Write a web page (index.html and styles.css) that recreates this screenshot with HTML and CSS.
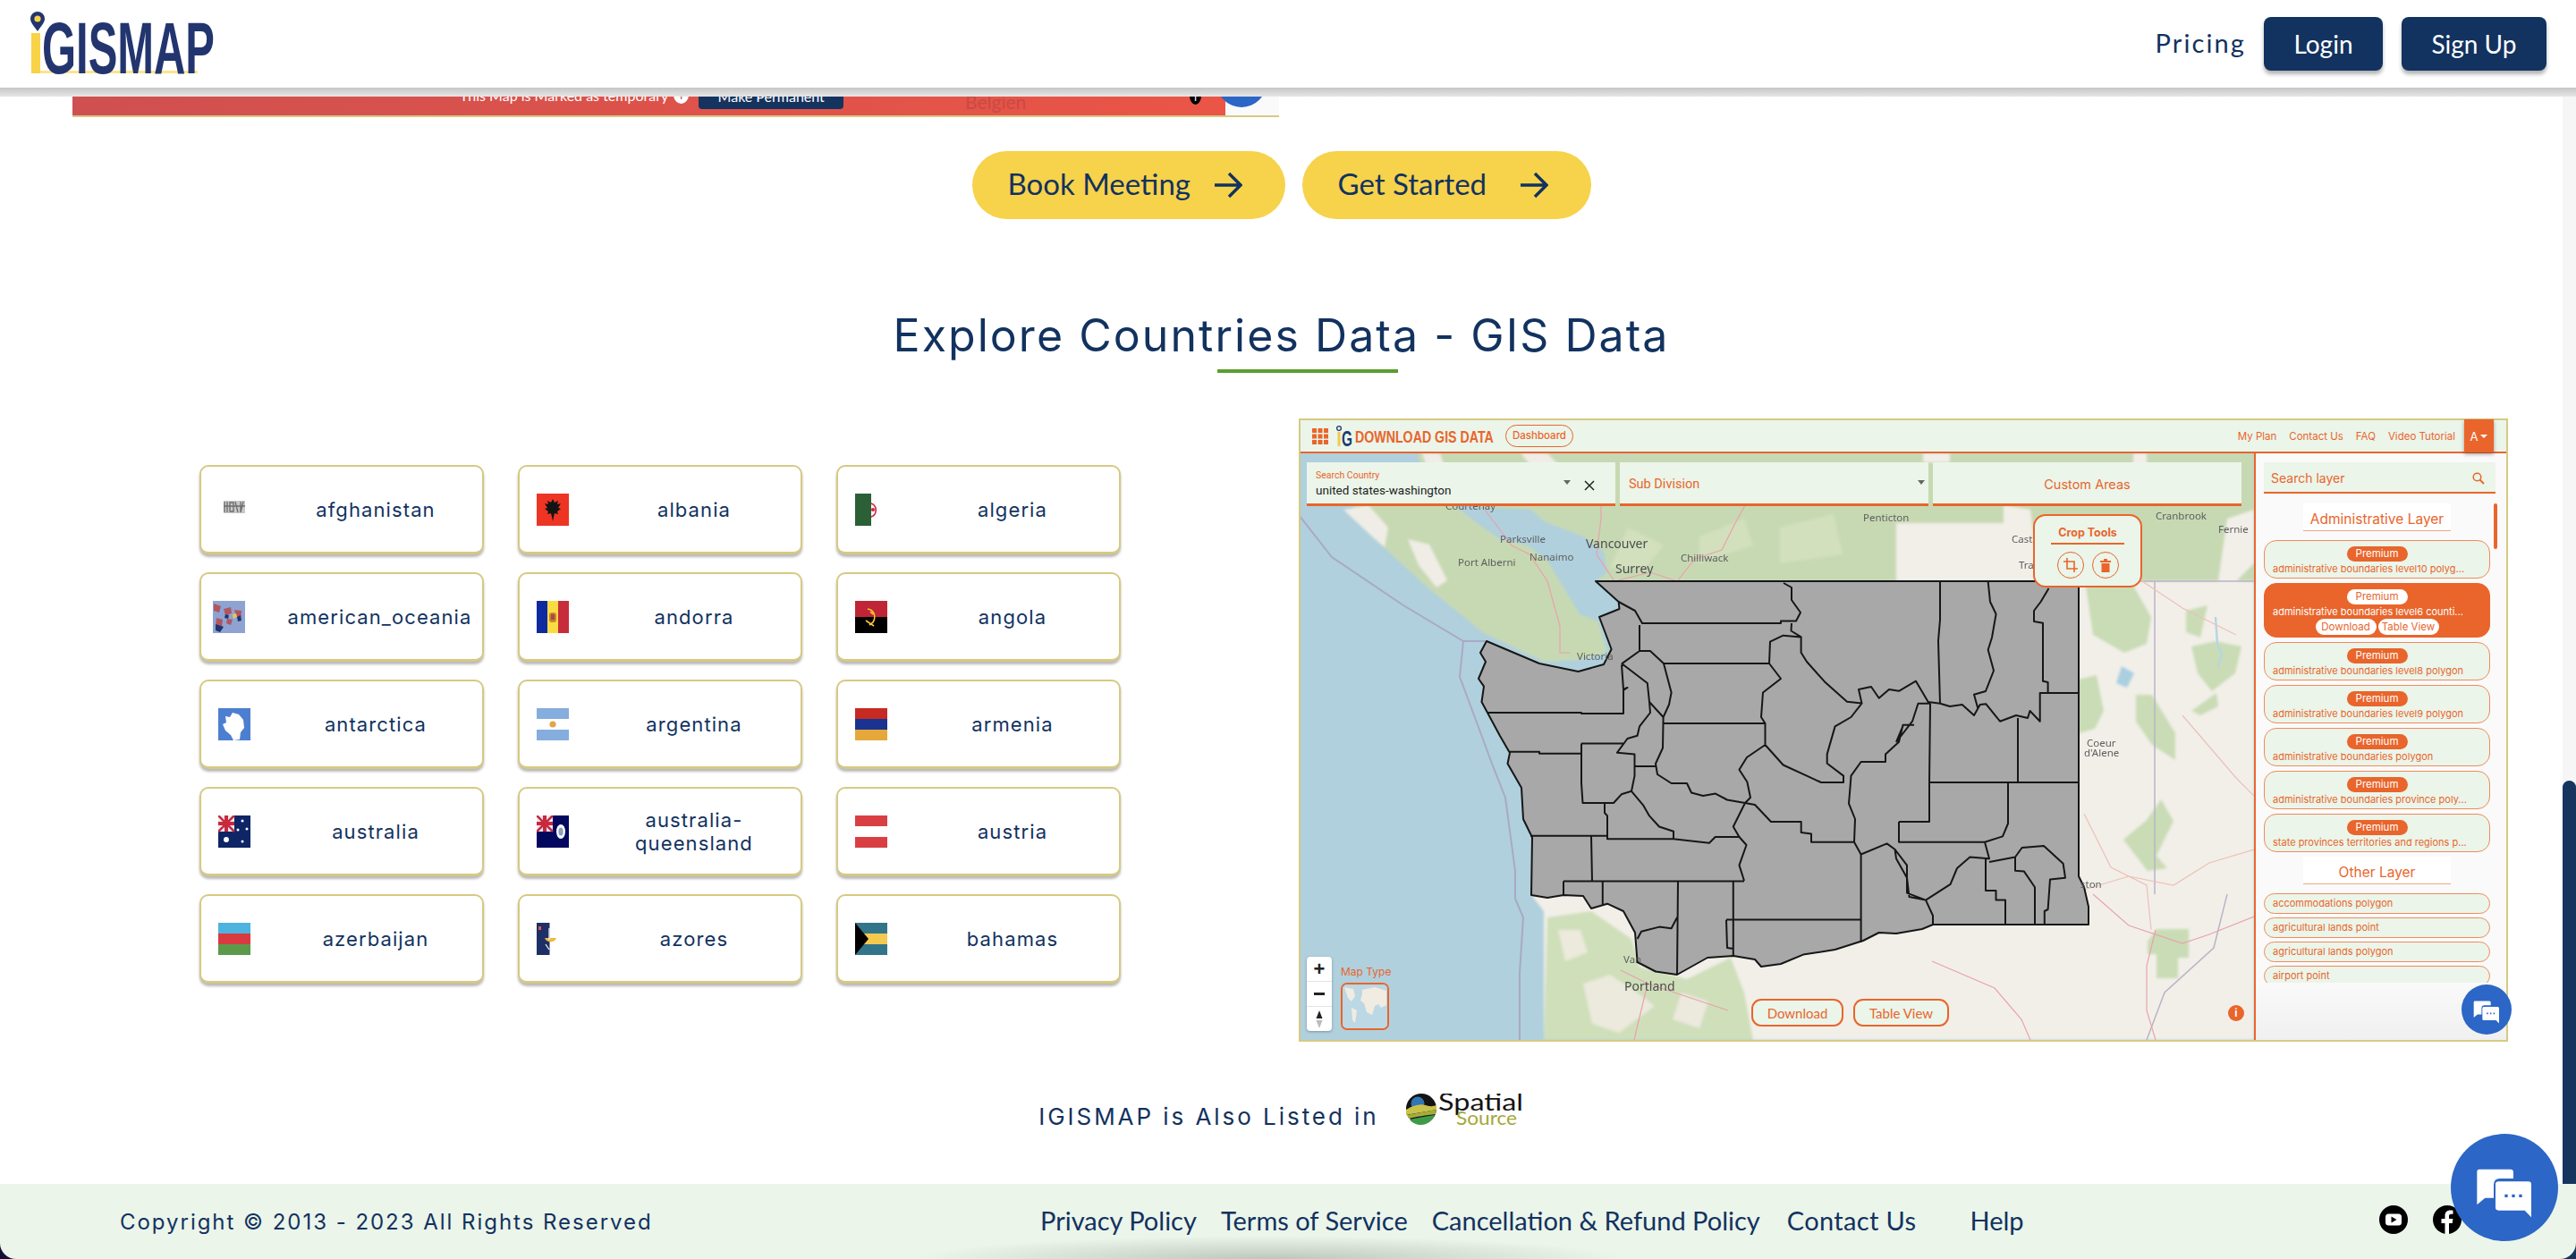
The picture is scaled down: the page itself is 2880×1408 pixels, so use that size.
FILE: index.html
```html
<!DOCTYPE html>
<html lang="en">
<head>
<meta charset="utf-8">
<title>IGISMAP - Explore Countries Data</title>
<link rel="stylesheet" href="styles.css">
</head>
<body>
<header class="site-header">
  <a class="logo" href="#">
    <svg width="212" height="98" viewBox="0 -12 212 98">
      <path d="M10 1a8 8 0 0 1 8 8c0 5-5 9-8 14c-3-5-8-9-8-14a8 8 0 0 1 8-8z" fill="#23356f"/>
      <circle cx="10" cy="9" r="3.6" fill="#f8d247"/>
      <rect x="3" y="25" width="10" height="45" fill="#f8d247"/>
      <rect x="13" y="67" width="176" height="3" fill="#fbe48d"/>
      <text class="logo-text" transform="translate(15 70) scale(.604 1)">GISMAP</text>
    </svg>
  </a>
  <nav class="site-nav">
    <a class="nav-link" href="#">Pricing</a>
    <a class="nav-btn nav-btn-login" href="#">Login</a>
    <a class="nav-btn nav-btn-signup" href="#">Sign Up</a>
  </nav>
</header>

<div class="scroll-track"><div class="scroll-thumb"></div></div>

<main class="content">
  <section class="banner">
    <div class="banner-map">
      <span class="banner-note">This Map is Marked as temporary</span>
      <span class="banner-info">i</span>
      <span class="banner-btn">Make Permanent</span>
      <span class="banner-place">Belgien</span>
      <span class="banner-dot">i</span>
      <span class="banner-chat"></span>
    </div>
    <div class="banner-side"></div>
  </section>

  <div class="cta-row">
    <a class="cta cta-book" href="#"><span class="cta-label">Book Meeting</span>
      <svg class="cta-arrow" width="32" height="32" viewBox="0 0 32 32"><path d="M1 16H29M17 3L30 16L17 29" fill="none" stroke="#12325f" stroke-width="3.4"/></svg>
    </a>
    <a class="cta cta-start" href="#"><span class="cta-label">Get Started</span>
      <svg class="cta-arrow" width="32" height="32" viewBox="0 0 32 32"><path d="M1 16H29M17 3L30 16L17 29" fill="none" stroke="#12325f" stroke-width="3.4"/></svg>
    </a>
  </div>

  <h1 class="section-title">Explore Countries Data - GIS Data</h1>
  <div class="section-rule"></div>

  <div class="explore">
    <div class="country-grid">
      <a class="country" href="#">
        <svg class="flag" viewBox="0 0 36 36"><rect width="36" height="36" fill="#fff"/><path d="M6 8h24v14H6z" fill="#c9c9c9"/><path d="M7 9v12M10 9v12M13 10h4v10h-4zM19 9l3 12M25 9v12M28 9l-3 12M6 14h24" stroke="#6d6d6d" stroke-width="1.3" fill="none"/></svg>
        <span class="country-name">afghanistan</span>
      </a>
      <a class="country" href="#">
        <svg class="flag" viewBox="0 0 36 36"><rect width="36" height="36" fill="#ee3524"/><path d="M18 6l2 4 4-2-1 4 4-1-3 5 3 1-4 3 1 3-4-1-1 4-1 5-1-5-1-4-4 1 1-3-4-3 3-1-3-5 4 1-1-4 4 2z" fill="#141414"/></svg>
        <span class="country-name">albania</span>
      </a>
      <a class="country" href="#">
        <svg class="flag" viewBox="0 0 36 36"><rect width="18" height="36" fill="#2b5f36"/><path d="M18 11a8 8 0 0 1 0 15" fill="#fff" stroke="#d2233c" stroke-width="1.6"/><circle cx="20" cy="18" r="2" fill="#d2233c"/></svg>
        <span class="country-name">algeria</span>
      </a>

      <a class="country country-long" href="#">
        <svg class="flag" viewBox="0 0 36 36"><rect width="36" height="36" fill="#8ea3d1"/><path d="M1 3l8 3-2 7-6-2zM12 9l8-2 1 7-7 2zM24 10l8 1-1 9-5-2zM4 19l7 2-1 8-7 1zM16 20l6 1-2 6-5-2z" fill="#b2555e"/><path d="M3 26l9 3-4 6-5-2zM14 15l4 1-1 4-4-1zM27 18l4-2 1 6-4 1z" fill="#1d3573"/><path d="M22 15l4-1 1 4-4 2z" fill="#e5c75a"/></svg>
        <span class="country-name">american_oceania</span>
      </a>
      <a class="country" href="#">
        <svg class="flag" viewBox="0 0 36 36"><rect width="12" height="36" fill="#0e2aa0"/><rect x="12" width="12" height="36" fill="#fbdb42"/><rect x="24" width="12" height="36" fill="#c72c3a"/><rect x="14" y="13" width="8" height="11" rx="3" fill="#c4862f"/><rect x="16" y="15" width="4" height="6" fill="#b3434a"/></svg>
        <span class="country-name">andorra</span>
      </a>
      <a class="country" href="#">
        <svg class="flag" viewBox="0 0 36 36"><rect width="36" height="18" fill="#bf2536"/><rect y="18" width="36" height="18" fill="#000"/><path d="M14 9c7 1 10 8 6 15l-4 3M12 22l9 6M17 12l3 3" fill="none" stroke="#f3cb35" stroke-width="1.6"/></svg>
        <span class="country-name">angola</span>
      </a>

      <a class="country" href="#">
        <svg class="flag" viewBox="0 0 36 36"><rect width="36" height="36" fill="#4d7fd0"/><path d="M8 9l5 1 3-5 7 2 5 6 1 9-4 5-1 8-7 1-3-6-6-5-3-7 4-2z" fill="#fff"/></svg>
        <span class="country-name">antarctica</span>
      </a>
      <a class="country" href="#">
        <svg class="flag" viewBox="0 0 36 36"><rect width="36" height="36" fill="#85addd"/><rect y="12" width="36" height="12" fill="#fff"/><circle cx="18" cy="18" r="3.6" fill="#e0a64a"/></svg>
        <span class="country-name">argentina</span>
      </a>
      <a class="country" href="#">
        <svg class="flag" viewBox="0 0 36 36"><rect width="36" height="12" fill="#c62a22"/><rect y="12" width="36" height="12" fill="#1a3390"/><rect y="24" width="36" height="12" fill="#e5a83a"/></svg>
        <span class="country-name">armenia</span>
      </a>

      <a class="country" href="#">
        <svg class="flag" viewBox="0 0 36 36"><rect width="36" height="36" fill="#0e2566"/><rect width="18" height="18" fill="#e9eaf2"/><path d="M0 0l18 18M18 0L0 18" stroke="#c8293c" stroke-width="2.5"/><path d="M9 0v18M0 9h18" stroke="#c8293c" stroke-width="4"/><circle cx="9" cy="27" r="3" fill="#fff"/><circle cx="27" cy="6" r="1.5" fill="#fff"/><circle cx="27" cy="29" r="1.5" fill="#fff"/><circle cx="32" cy="15" r="1.5" fill="#fff"/><circle cx="22" cy="16" r="1.5" fill="#fff"/></svg>
        <span class="country-name">australia</span>
      </a>
      <a class="country" href="#">
        <svg class="flag" viewBox="0 0 36 36"><rect width="36" height="36" fill="#03075e"/><rect width="18" height="18" fill="#e9eaf2"/><path d="M0 0l18 18M18 0L0 18" stroke="#c8293c" stroke-width="2.5"/><path d="M9 0v18M0 9h18" stroke="#c8293c" stroke-width="4"/><ellipse cx="27" cy="18" rx="5" ry="8" fill="#fff"/><ellipse cx="27" cy="18" rx="2.6" ry="4.5" fill="#7aa0d4"/><circle cx="27" cy="18" r="1.2" fill="#d8a335"/></svg>
        <span class="country-name">australia-<br>queensland</span>
      </a>
      <a class="country" href="#">
        <svg class="flag" viewBox="0 0 36 36"><rect width="36" height="12" fill="#d93f42"/><rect y="24" width="36" height="12" fill="#d93f42"/></svg>
        <span class="country-name">austria</span>
      </a>

      <a class="country" href="#">
        <svg class="flag" viewBox="0 0 36 36"><rect width="36" height="12" fill="#4fb3df"/><rect y="12" width="36" height="12" fill="#d93a3f"/><rect y="24" width="36" height="12" fill="#5b9a4a"/><path d="M20 14a4 4 0 1 0 0 8a3.4 3.4 0 1 1 0-8z" fill="#fff"/></svg>
        <span class="country-name">azerbaijan</span>
      </a>
      <a class="country" href="#">
        <svg class="flag" viewBox="0 0 36 36"><rect width="14.5" height="36" fill="#1d2f66"/><rect x="2" y="4" width="3" height="4" fill="#e2564e"/><path d="M9 17a7 7 0 0 0 13 0z" fill="#eeb93f"/><path d="M14 6v13M10 24l4 6" stroke="#fff" stroke-width="1.2"/></svg>
        <span class="country-name">azores</span>
      </a>
      <a class="country" href="#">
        <svg class="flag" viewBox="0 0 36 36"><rect width="36" height="36" fill="#32758a"/><rect y="12" width="36" height="12" fill="#f4c94e"/><path d="M0 0L15 18L0 36z" fill="#000"/></svg>
        <span class="country-name">bahamas</span>
      </a>
    </div>

    <section class="map-window">
      <div class="map-top">
        <svg class="map-grid-icon" width="18" height="18" viewBox="0 0 18 18"><path d="M0 0h5v5H0zM6.500 0h5v5h-5zM13 0h5v5h-5zM0 6.500h5v5H0zM6.500 6.500h5v5h-5zM13 6.500h5v5h-5zM0 13h5v5H0zM6.500 13h5v5h-5zM13 13h5v5h-5z" fill="#e9652b"/></svg>
        <svg class="map-logo" width="18" height="30" viewBox="0 0 18 30"><circle cx="3" cy="6" r="2.400" fill="none" stroke="#1c3a6e" stroke-width="1.300"/><rect x="1.500" y="10" width="3" height="16" fill="#f4c94e"/><text class="map-logo-g" transform="translate(6 26) scale(.64 1)">G</text></svg>
        <svg class="map-title-svg" width="158" height="26" viewBox="0 0 158 26"><text class="map-title" transform="translate(0 20) scale(.789 1)">DOWNLOAD GIS DATA</text></svg>
        <a class="map-dash" href="#">Dashboard</a>
        <div class="map-links">
          <a href="#">My Plan</a>
          <a href="#">Contact Us</a>
          <a href="#">FAQ</a>
          <a href="#">Video Tutorial</a>
        </div>
        <div class="map-user">A<span class="caret caret-white"></span></div>
      </div>
      <div class="map-body">
        <div class="map-canvas">
          <svg class="map-art" width="1066" height="656" viewBox="1454 507 1066 656">
            <rect x="1454" y="507" width="1066" height="656" fill="#b0d0dd"/>
            <g class="map-land">
            <path d="M1500 545L1534 600L1596 657L1659 708L1726 740L1766 738L1797 730L1787 695L1766 687L1748 657L1730 627L1708 610L1677 603L1654 587L1619 560L1574 545Z" fill="#c7d9b3"/>
            <path d="M1502 570L1534 600L1548 612L1552 590L1530 565ZM1574 603l24 6 20 40 -12 8 -20 -25z" fill="#f0ede6"/>
            <path d="M1585 507H2520V650H1784L1797 640L1793 617L1770 600L1726 583L1712 570L1650 567L1587 517Z" fill="#c7d9b3"/>
            <path d="M1700 507h30l20 20 -25 10zM1590 507h20l10 30 -20 0z" fill="#f0ede6"/>
            <path d="M2120 585H2240V650H2120ZM2240 565l30 5 10 80h-40zM2385 507h15v20h-15zM2150 507h30v10h-30zM2490 580l30 -10v60l-20 20h-20z" fill="#f2efe9"/>
            <path d="M1820 590l40 20 -20 25h-40z M1900 600l50 -20 10 30 -60 20z M1990 590l60 -15 10 45 -70 10z" fill="#d2e0bd"/>
            <rect x="2324" y="650" width="196" height="513" fill="#f2efe9"/>
            <path d="M1712 1001L2335 1001V1163H1726V1019Z" fill="#f2efe9"/>
            <path d="M1730 1026L1779 1019L1824 1050L1833 1081L1886 1095L1935 1071L1950 1110L1960 1163H1726Z" fill="#cfdfba"/>
            <path d="M1742 1040l25 0 8 25 -25 10zM1770 1100l30 -10 30 20 20 15 -40 30 -30 -10zM1880 1110l30 10 -10 30 -30 -10z" fill="#ece9dd"/>
            <path d="M2332 655L2385 655L2405 690L2400 720L2375 730L2340 710ZM2444 683L2468 677L2460 713L2444 707ZM2450 723L2477 717L2506 723L2499 753L2473 773L2457 753ZM2388 777L2406 777L2432 820L2432 850L2406 833L2388 807ZM2450 795L2478 775L2480 790L2460 800ZM2416 894L2430 918L2411 957L2423 971L2401 974L2374 939L2400 917ZM2411 1039H2447V1071H2435V1094H2411V1067H2401V1053ZM2324 760l20 -5 8 40 -10 20 -18 5z" fill="#c9dcb5"/>
            <path d="M2372 745l14 8 -8 16 -12 -5z" fill="#a9cfe0"/>
            </g>
            <path d="M2477 690l2 30 5 12 -4 14" fill="none" stroke="#b7d6e2" stroke-width="2.500"/>
            <path d="M1453 577L1489 623L1569 677L1636 717H1661M1636 717L1632 757L1654 816L1668 854L1683 892L1694 974L1694 1005L1703 1026L1699 1088V1163" fill="none" stroke="#a9a9c6" stroke-width="2"/>
            <path d="M2324 650H2520M2409 650V1000M2490 1000L2475 1060L2420 1110L2400 1163" fill="none" stroke="#b9b4c7" stroke-width="1.500"/>
            <path d="M1660 570l30 40 20 10 20 30 14 50 0 30h12M1790 550v30l-5 40 20 30 40 -10 30 10 20 -25 30 -10 15 -30 25 -45M2340 1000l40 35 60 20 30 -10 50 -20M2160 1075l70 30 30 35 10 23M1842 1100l-15 63M1842 1100l-30 -15M1842 1100l30 10 60 20M2410 1040l-10 40 0 50 10 33" fill="none" stroke="#e9a2ad" stroke-width="1.200"/>
            <path d="M2330 995l50 -15 50 10 40 -25 50 -15M2330 910l30 60 40 20 5 50M2380 640l60 40 60 30M2440 800l60 70 20 20" fill="none" stroke="#ecc0b6" stroke-width="1.200"/>
            <path d="M1784 650H2324V980L2330 992L2335 1014L2335 1034H2161L2149 1039L2120 1044L2100.700 1043L2083 1052L2051.600 1062L2016 1067.600L1991 1078L1969 1081L1962 1073L1938 1069L1909 1071L1875 1090L1851 1086.500L1830.600 1076L1828 1043L1815 1019L1797 1010.700L1779 1016L1770 1002L1748 1001L1730 1004L1712 1001L1713 936.500L1703 916L1701 881L1685.500 854L1688 842L1677 823L1663 797L1656.500 785L1659 767.600L1653 759L1661 740L1655 730L1662 717L1721 742L1764.500 751L1793 743L1801.600 726L1788 690L1810.500 681L1809.600 673Z" fill="#a8a8a8" stroke="#161616" stroke-width="2" stroke-linejoin="round"/>
            <path class="county-lines" d="M1809.600 673L1828 683L1836 697H1991V694.500L2008 694.500L2013 685L2003 671V657L1994 652M1833 699V728L1813 742.400M1833 728H1845L1860 742H1978M2003 697L2002.500 705.500L2013.600 712.400L1993.600 710.700L1979 717.600L1978 742L1991 759L1971 774.500L1969 802L1973.500 809H1859.600M1860 742L1868.600 774.500L1866 788L1859.600 802L1859 836.500L1851 854L1853 866L1868.600 876H1886L1891 886.500L1904 890L1918 887.600L1931 894.500L1951 898M1973.500 809V833L1953 847L1944.500 860.700L1953.400 874.500L1957 892L1951 898M1973.500 833L1993.600 855.500L2020 867.600L2036 875H2061V867.600L2042.700 853.800V843.400L2051.600 812.400L2069.500 802L2081.500 786.600L2065 784.800L2040 762.400L2020 740L2013.600 729.700V712.400M2081.500 786.600L2078 771L2092 768L2100.700 780.700L2112 771L2123 772.800L2142 761.700L2155.700 785L2169 786.700L2180 790L2193.700 788L2207 800L2213.700 788L2220.400 787.300L2236 806.700L2254 800L2267 803L2269.500 795L2280.700 806.700V775H2324.500M2169 650V693L2167 716.700L2169 786.700M2222.700 650.700L2225 673L2231.600 686.700L2227 713L2222.700 726.700L2229 750L2220 773L2207 776.700L2211.500 793M2290.500 658L2281.600 673L2274 683V695L2284 696.700V761.700L2289.600 763V775M2158 786.700L2157 875M2256 803V875M2120 830L2138 806.700L2144.500 786.700H2158M2140 810.700H2127.500L2123 829.700L2108 843.400V852H2080.600L2069.500 867.600L2068.600 879.700L2067 898.600L2074 916L2073 941.700L2080.600 955.500L2109.600 943.400L2118.600 950L2132 967.600V998.600L2153 1006.600M2120 830L2127.500 812M1951 898L1962 900L1980 919H2013.700V931L2025 932.400V941.700H2073M2123 919H2157V875M2123 919V941.700H2219L2239 935.400L2245 921V875M2156 875H2323.600M2219 941.800L2224 960.300L2202.400 958.500L2188 971L2180.600 988.800L2153 1006.600L2134.500 1003L2132 981.700L2120 960.300L2118.600 950M2153 1006.600L2161 1024L2161 1034M2220 960.300V996H2231.500V1006.600H2242V1033M2224 964L2253 958.500L2260.600 948L2285 946L2306.600 965.700L2309 981.700L2292 983.400L2289.600 1017L2285.800 1019V1033M2253 958.500V973.800L2263 974.600L2275 992.300V1033M1813 743.400L1815 771L1819.500 769L1815 772V798H1768V797H1663M1813 742L1841.800 764L1844 785L1859.600 802M1844 785L1845 797L1833 812.400L1830.600 822.800L1819.500 826L1808 841.700L1827.500 843.400V857H1850.700M1768 831.400H1815M1688 840.700H1721V842.800H1768M1768 831.400V876L1769.500 898H1804L1812.800 888.300L1824 884.800L1827.500 867.600V857M1794 898V909L1797 912.400V938.300H1871L1886.400 940L1911 942.800L1917.700 936H1944.500M1824 884.800L1837 900.300L1844 912.400L1855 924.500L1871 929.700V938M1951 898L1937.800 924.500L1944.500 936L1952.500 945L1944.500 967.600L1950 985M1711 934.800H1797M1779 934.800L1780 985.500M1748 985.500H1950M1748 985.500V1001M1791.800 985.500V1011.700M1876 986.500L1875 1090M1937.800 985.500V1069M1930 1028.600H2080.600M1930 1028.600L1931 1060L1938 1061M2080.600 955.500V1053.800M1830.600 1050L1835 1041.700L1855 1036.600L1868.600 1038.300L1875 1026" fill="none" stroke="#161616" stroke-width="2" stroke-linejoin="round"/>
            <g class="map-labels">
              <text x="1616" y="570">Courtenay</text>
              <text x="1677" y="607">Parksville</text>
              <text x="1630" y="633">Port Alberni</text>
              <text x="1710" y="627">Nanaimo</text>
              <text class="map-label-big" x="1773" y="613">Vancouver</text>
              <text class="map-label-big" x="1806" y="641">Surrey</text>
              <text x="1879" y="628">Chilliwack</text>
              <text x="2083" y="583">Penticton</text>
              <text x="2410" y="581">Cranbrook</text>
              <text x="2480" y="596">Fernie</text>
              <text x="2249" y="607">Castl</text>
              <text x="2257" y="636">Trai</text>
              <text x="1763" y="738">Victoria</text>
              <text x="2333" y="835">Coeur</text>
              <text x="2330" y="846">d'Alene</text>
              <text x="2326" y="993">ston</text>
              <text x="1815" y="1077">Van</text>
              <text class="map-label-big" x="1816" y="1108">Portland</text>
            </g>
          </svg>

          <div class="map-filters">
            <div class="filter">
              <div class="filter-text">
                <span class="filter-label">Search Country</span>
                <span class="filter-value">united states-washington</span>
              </div>
              <span class="caret caret-grey"></span>
              <svg class="filter-x" width="12" height="12" viewBox="0 0 12 12"><path d="M1 1l10 10M11 1L1 11" stroke="#222" stroke-width="1.500"/></svg>
            </div>
            <div class="filter filter-sub">
              <span class="filter-placeholder">Sub Division</span>
              <span class="caret caret-grey"></span>
            </div>
            <div class="filter filter-custom">Custom Areas</div>
          </div>

          <div class="crop-tools">
            <div class="crop-title">Crop Tools</div>
            <div class="crop-icons">
              <span class="crop-btn"><svg width="16" height="16" viewBox="0 0 16 16"><path d="M4 0v12h12M0 4h12v12" fill="none" stroke="#e9652b" stroke-width="1.600"/></svg></span>
              <span class="crop-btn"><svg width="14" height="16" viewBox="0 0 14 16"><path d="M1 3h12v2H1zM5 1h4v2H5zM2.500 6h9v10h-9z" fill="#e9652b"/></svg></span>
            </div>
          </div>

          <div class="zoom-ctrl">
            <span class="zoom-cell zoom-sym">+</span>
            <span class="zoom-cell zoom-minus"></span>
            <span class="zoom-cell"><svg width="8" height="22" viewBox="0 0 8 22"><path d="M4 1l3.500 9h-7z" fill="#222"/><path d="M4 21l3.500-9h-7z" fill="#bbb"/></svg></span>
          </div>

          <div class="map-type">
            <span class="map-type-label">Map Type</span>
            <div class="map-type-thumb">
              <svg width="50" height="49" viewBox="0 0 50 49"><rect width="50" height="49" fill="#bcd8e4"/><path d="M2 3l10 2 2 8-4 6-4-4zM10 26l6 3-2 14-3-3zM22 6l14-3 13 4v16l-6 3-3-4-4 2-3 10-6-3-3-10-4-3 2-8z" fill="#f0ece2"/></svg>
            </div>
          </div>

          <div class="map-actions">
            <a class="map-action map-action-dl" href="#">Download</a>
            <a class="map-action map-action-tv" href="#">Table View</a>
          </div>

          <span class="map-info">i</span>
        </div>

        <aside class="layers">
          <div class="layer-search">
            <span>Search layer</span>
            <svg width="14" height="14" viewBox="0 0 14 14"><circle cx="5.500" cy="5.500" r="4.300" fill="none" stroke="#e9652b" stroke-width="1.500"/><path d="M8.500 8.500L13 13" stroke="#e9652b" stroke-width="1.800"/></svg>
          </div>
          <div class="layer-list">
            <div class="layer-heading">Administrative Layer</div>
            <div class="layer-card"><span class="pill">Premium</span><span class="layer-name">administrative boundaries level10 polyg...</span></div>
            <div class="layer-card layer-card-on"><span class="pill">Premium</span><span class="layer-name">administrative boundaries level6 counti...</span>
              <div class="layer-actions"><span class="mini-pill">Download</span><span class="mini-pill">Table View</span></div>
            </div>
            <div class="layer-card"><span class="pill">Premium</span><span class="layer-name">administrative boundaries level8 polygon</span></div>
            <div class="layer-card"><span class="pill">Premium</span><span class="layer-name">administrative boundaries level9 polygon</span></div>
            <div class="layer-card"><span class="pill">Premium</span><span class="layer-name">administrative boundaries polygon</span></div>
            <div class="layer-card"><span class="pill">Premium</span><span class="layer-name">administrative boundaries province poly...</span></div>
            <div class="layer-card"><span class="pill">Premium</span><span class="layer-name">state provinces territories and regions p...</span></div>
            <div class="layer-heading layer-heading-other">Other Layer</div>
            <div class="layer-plain">accommodations polygon</div>
            <div class="layer-plain">agricultural lands point</div>
            <div class="layer-plain">agricultural lands polygon</div>
            <div class="layer-plain">airport point</div>
            <div class="layer-thumb"></div>
          </div>
          <span class="chat chat-small">
            <svg width="56" height="56" viewBox="0 0 360 360"><path d="M96 119H200Q210 119 210 129V150H165Q144 150 144 172V215H115L88 238V127Q88 119 96 119Z" fill="#fff"/><path d="M160 160H260Q270 160 270 170V280L248 257H160Q150 257 150 247V170Q150 160 160 160Z" fill="#fff"/><path d="M181 203h10v10h-10zM205 203h10v10h-10zM229 203h10v10h-10z" fill="#2c66c6"/></svg>
          </span>
        </aside>
      </div>
    </section>
  </div>

  <div class="listed">
    <span class="listed-text">IGISMAP is Also Listed in</span>
    <svg class="listed-logo" width="133" height="36" viewBox="0 0 133 36">
      <circle cx="18" cy="17" r="17" fill="#141414"/>
      <circle cx="14" cy="11" r="7.500" fill="#2f77b5"/>
      <path d="M1 18c8-5 16-7 22-5s8 1 12 0v5c-10 2-24 4-34 6z" fill="#c8c24a"/>
      <path d="M2 24c10-2 22-4 33-6l-1 5c-10 1-22 3-30 5z" fill="#a5ac3a"/>
      <path d="M5 29c9-2 19-4 28-5c-3 7-9 11-15 11c-5 0-10-2-13-6z" fill="#3f9b48"/>
      <text class="spatial-top" x="37" y="19" textLength="95" lengthAdjust="spacingAndGlyphs">Spatial</text>
      <text class="spatial-bottom" x="57" y="35" textLength="68" lengthAdjust="spacingAndGlyphs">Source</text>
    </svg>
  </div>
</main>

<footer class="site-footer">
  <span class="copyright">Copyright © 2013 - 2023 All Rights Reserved</span>
  <nav class="footer-links">
    <a href="#">Privacy Policy</a>
    <a href="#">Terms of Service</a>
    <a href="#">Cancellation &amp; Refund Policy</a>
    <a class="footer-contact" href="#">Contact Us</a>
    <a class="footer-help" href="#">Help</a>
  </nav>
  <div class="footer-social">
    <svg width="32" height="32" viewBox="0 0 32 32"><circle cx="16" cy="16" r="16" fill="#000"/><rect x="7" y="9.500" width="18" height="13" rx="3.500" fill="#fff"/><path d="M13.500 12.500l6 3.500-6 3.500z" fill="#000"/></svg>
    <svg width="32" height="32" viewBox="0 0 32 32"><circle cx="16" cy="16" r="16" fill="#000"/><path d="M13.500 32V20H9.500v-5h4v-3.500c0-4 2.500-6 6-6 1.700 0 3 .2 3 .2v4h-2c-2 0-2.500 1-2.500 2.300V15h4.400l-.7 5h-3.700v12z" fill="#fff"/></svg>
  </div>
</footer>

<a class="chat chat-large" href="#">
  <svg width="120" height="120" viewBox="0 0 360 360"><path d="M96 119H200Q210 119 210 129V150H165Q144 150 144 172V215H115L88 238V127Q88 119 96 119Z" fill="#fff"/><path d="M160 160H260Q270 160 270 170V280L248 257H160Q150 257 150 247V170Q150 160 160 160Z" fill="#fff"/><path d="M181 203h10v10h-10zM205 203h10v10h-10zM229 203h10v10h-10z" fill="#2c66c6"/></svg>
</a>
</body>
</html>
```
FILE: styles.css
```css
* { box-sizing: border-box; }
html, body { margin: 0; height: 1408px; overflow: hidden; }
body { position: relative; background: linear-gradient(#fff 1385px, #15103a 0); color: #12325f; font-family: "Inter", "Liberation Sans", sans-serif; }
a { color: inherit; text-decoration: none; }

/* Header */
.site-header { position: absolute; top: 0; left: 0; right: 0; height: 98px; z-index: 10; background: #fff; display: flex; align-items: center; justify-content: space-between; padding: 0 33px 0 32px; }
.site-header::after { content: ""; position: absolute; left: 0; right: 0; top: 98px; height: 10px; background: linear-gradient(#c6c6c6, #e6e6e6); }
.logo { display: block; height: 98px; }
.logo-text { font-family: "Liberation Sans", sans-serif; font-weight: 700; font-size: 81px; fill: #23356f; }
.site-nav { display: flex; align-items: center; }
.nav-link { font-family: "Lato", sans-serif; font-size: 29px; letter-spacing: 2.1px; margin: -3px 20px 0 0; color: #12325f; }
.nav-btn { display: flex; align-items: center; justify-content: center; height: 60px; border-radius: 8px; background: #12325f; color: #fff; font-family: "Lato", sans-serif; font-size: 28px; box-shadow: 0 4px 4px rgba(0,0,0,.3); }
.nav-btn-login { width: 133px; margin-right: 21px; }
.nav-btn-signup { width: 162px; }

/* Scrollbar overlay */
.scroll-track { position: absolute; top: 108px; right: 0; bottom: 0; width: 15px; background: #f6f6f6; }
.scroll-thumb { margin-top: 765px; height: 535px; background: #15355f; border-radius: 8px 8px 0 0; }

/* Page content */
.content { padding-right: 15px; }
.banner { display: flex; width: 1349px; height: 131px; margin-left: 81px; border-bottom: 2px solid #d6c983; }
.banner-map { position: relative; width: 1289px; display: flex; align-items: flex-end; padding-left: 433px; background: linear-gradient(90deg, #cf5050, #ea5546); font-family: "Lato", sans-serif; }
.banner-side { flex: 1; background: #fafafa; }
.banner-note { color: #fff; font-size: 16px; line-height: 44px; margin-bottom: 10px; height: 34px; white-space: nowrap; }
.banner-info { width: 17px; height: 20px; border-radius: 50%; margin: 0 11px 13px 6px; background: #fff; color: #c94a50; font-size: 14px; text-align: center; line-height: 20px; }
.banner-btn { width: 162px; height: 40px; padding-top: 16px; margin-bottom: 7px; border-radius: 4px; background: #15335f; color: #fff; font-size: 16px; text-align: center; }
.banner-place { position: absolute; left: 998px; bottom: 3px; color: #c94a44; font-size: 21px; }
.banner-dot { position: absolute; left: 1249px; bottom: 12px; width: 13px; height: 20px; border-radius: 50%; background: #000; color: #fff; font-size: 13px; text-align: center; line-height: 22px; }
.banner-chat { position: absolute; left: 1279px; bottom: 9px; width: 56px; height: 56px; border-radius: 50%; background: #2c66c6; z-index: 1; }

.cta-row { display: flex; justify-content: center; gap: 19px; margin-top: 38px; }
.cta { display: flex; align-items: center; justify-content: space-between; height: 76px; border-radius: 38px; background: #f7d24b; color: #12325f; font-family: "Lato", sans-serif; font-size: 33px; padding: 0 48px 0 40px; }
.cta-label { margin-top: -5px; }
.cta-book { width: 350px; }
.cta-start { width: 323px; }
.cta-arrow { flex: none; }

.section-title { margin: 100px 0 0; font-weight: 400; font-size: 50px; line-height: 60px; letter-spacing: 2.05px; text-align: center; color: #12325f; }
.section-rule { width: 202px; height: 4px; margin: 8px 0 0 1361px; background: #5a9e2f; }

.explore { display: flex; align-items: flex-start; margin-top: 51px; }
.country-grid { display: grid; grid-template-columns: repeat(3, 318px); grid-auto-rows: 100px; gap: 20px 38px; margin: 52px 199px 0 223px; }
.country { display: flex; align-items: center; padding-left: 19px; border: 2px solid #d6c983; border-bottom-width: 3px; border-radius: 10px; background: #fff; box-shadow: 0 3px 3px rgba(0,0,0,.28); color: #12325f; }
.flag { flex: none; width: 36px; height: 36px; }
.country-name { flex: 1; margin-left: 21px; font-size: 22px; line-height: 26px; letter-spacing: 1.1px; text-align: center; }
.country-long { padding-left: 13px; }
.country-long .country-name { margin-left: 36px; white-space: nowrap; }

/* Map window */
.map-window { flex: none; width: 1352px; height: 697px; border: 2px solid #d6c983; background: #fafafa; font-family: "Inter", sans-serif; color: #e9652b; }
.map-top { display: flex; align-items: center; height: 37px; padding-left: 13px; background: #ebf5ea; border-bottom: 2px solid #e9652b; }
.map-grid-icon { flex: none; margin-right: 9px; }
.map-logo { flex: none; margin-right: 3px; }
.map-logo-g { font-family: "Liberation Sans", sans-serif; font-weight: 700; font-size: 24px; fill: #1c3a6e; }
.map-title-svg { flex: none; margin-right: 10px; }
.map-title { font-family: "Liberation Sans", sans-serif; font-weight: 700; font-size: 18px; fill: #e9652b; }
.map-dash { display: flex; align-items: center; height: 25px; padding: 0 7px; margin-top: -1px; border: 1px solid #e9652b; border-radius: 13px; font-size: 11.500px; font-weight: 500; color: #e9652b; }
.map-links { display: flex; gap: 14px; margin-left: auto; margin-right: 10px; font-size: 11.500px; color: #e9652b; }
.map-user { display: flex; align-items: center; justify-content: center; gap: 3px; width: 33px; height: 37px; margin-right: 14px; background: #e9652b; color: #fff; font-size: 13px; box-shadow: 0 2px 4px rgba(0,0,0,.35); position: relative; z-index: 2; }
.caret { display: inline-block; width: 0; height: 0; border-left: 4px solid transparent; border-right: 4px solid transparent; }
.caret-white { border-top: 4px solid #fff; }
.caret-grey { border-top: 5px solid #666; }

.map-body { display: flex; height: 656px; }
.map-canvas { position: relative; width: 1066px; height: 656px; overflow: hidden; }
.map-art { display: block; filter: blur(.6px); }
.map-land { filter: blur(1.5px); }
.map-labels text { font-family: "Noto Sans", sans-serif; font-size: 11.500px; fill: #5e5e5e; }
.map-labels .map-label-big { font-size: 14px; fill: #4c4c4c; }

.map-filters { position: absolute; top: 10px; left: 7px; display: flex; gap: 5px; }
.filter { display: flex; align-items: center; width: 345px; height: 49px; padding: 3px 10px 0; background: #ebf5ea; border-bottom: 3px solid #e9652b; }
.filter-text { display: flex; flex-direction: column; flex: 1; }
.filter-label { font-family: "Roboto", sans-serif; font-size: 10.500px; line-height: 14px; color: #e9652b; }
.filter-value { font-family: "Roboto", sans-serif; font-size: 13.500px; line-height: 19px; color: #222; }
.filter-x { margin: 3px 13px 0 15px; }
.filter .caret-grey { margin-top: -4px; }
.filter-sub { justify-content: space-between; padding-right: 4px; }
.filter-placeholder { font-family: "Roboto", sans-serif; font-size: 14.500px; color: #e9652b; }
.filter-custom { justify-content: center; font-size: 14.500px; color: #e9652b; }

.crop-tools { position: absolute; left: 819px; top: 68px; width: 122px; height: 82px; padding-top: 11px; border: 2px solid #e9652b; border-radius: 14px; background: #ebf5ea; }
.crop-title { width: 82px; margin: 0 auto; padding-bottom: 3px; border-bottom: 2px solid #e9652b; font-size: 12.500px; font-weight: 700; line-height: 16px; text-align: center; white-space: nowrap; }
.crop-icons { display: flex; justify-content: center; gap: 9px; margin-top: 8px; }
.crop-btn { display: flex; align-items: center; justify-content: center; width: 30px; height: 30px; border: 1px solid #e9652b; border-radius: 50%; }

.zoom-ctrl { position: absolute; left: 7px; top: 563px; display: flex; flex-direction: column; width: 28px; height: 83px; border-radius: 4px; background: #fff; box-shadow: 0 1px 3px rgba(0,0,0,.3); }
.zoom-cell { display: flex; flex: 1; align-items: center; justify-content: center; border-bottom: 1px solid #e4e4e4; color: #222; }
.zoom-cell:last-child { border-bottom: 0; }
.zoom-sym { font-family: "Liberation Sans", sans-serif; font-weight: 700; font-size: 22px; }
.zoom-minus::before { content: ""; width: 12px; height: 3px; background: #222; }
.map-type { position: absolute; left: 45px; top: 572px; }
.map-type-label { display: block; font-size: 12px; line-height: 16px; color: #e9652b; white-space: nowrap; }
.map-type-thumb { width: 54px; height: 53px; margin-top: 4px; border: 2px solid #e9652b; border-radius: 7px; overflow: hidden; }
.map-type-thumb svg { display: block; }
.map-actions { position: absolute; left: 504px; top: 610px; display: flex; gap: 11px; }
.map-action { display: flex; align-items: center; justify-content: center; height: 31px; border: 2px solid #e9652b; border-radius: 11px; background: #ebf5ea; color: #e9652b; font-family: "Lato", sans-serif; font-size: 15px; }
.map-action-dl { width: 103px; }
.map-action-tv { width: 107px; }
.map-info { position: absolute; left: 1037px; top: 617px; width: 18px; height: 18px; border-radius: 50%; background: #e9652b; color: #fff; font-size: 12px; font-weight: 700; line-height: 18px; text-align: center; }

/* Layer sidebar */
.layers { position: relative; width: 282px; height: 656px; padding: 10px 0 0 9px; border-left: 2px solid #e9652b; background: linear-gradient(#fafafa 90%, #f0f0f0); }
.layer-search { display: flex; align-items: center; justify-content: space-between; width: 259px; height: 35px; padding: 2px 12px 0 8px; border-bottom: 2px solid #e9652b; background: #ebf5ea; font-size: 14px; color: #e9652b; }
.layer-list { position: relative; width: 261px; height: 536px; margin-top: 11px; overflow: hidden; }
.layer-thumb { position: absolute; right: 0; top: 0; width: 4px; height: 51px; border-radius: 2px; background: #e9652b; }
.layer-heading { width: 165px; height: 31px; margin: 0 0 10px 44px; padding-top: 3px; background: #fff; border-bottom: 1px solid #f2a684; font-size: 15.500px; line-height: 29px; text-align: center; color: #e9652b; }
.layer-heading-other { margin-top: 5px; }
.layer-card { display: flex; flex-direction: column; align-items: center; width: 253px; height: 43px; margin-bottom: 5px; padding: 6px 0 0; border: 1px solid #f08a5d; border-radius: 14px; background: #ebf5ea; color: #e9652b; }
.layer-card-on { height: 61px; background: #e9652b; border-color: #e9652b; color: #fff; }
.pill { display: block; width: 68px; height: 17px; border-radius: 9px; background: #e9652b; color: #fff; font-size: 11.500px; line-height: 17px; text-align: center; }
.layer-card-on .pill { background: #fff; color: #e9652b; }
.layer-name { display: block; width: 100%; padding-left: 9px; font-size: 11px; line-height: 16px; white-space: nowrap; overflow: hidden; }
.layer-actions { display: flex; gap: 2px; }
.mini-pill { width: 68px; height: 18px; border-radius: 9px; background: #fff; color: #e9652b; font-size: 11.500px; line-height: 18px; text-align: center; }
.layer-plain { width: 253px; height: 23px; margin-bottom: 4px; padding-left: 9px; border: 1px solid #f08a5d; border-radius: 12px; background: #ebf5ea; color: #e9652b; font-size: 11px; line-height: 21px; white-space: nowrap; }
.chat { position: absolute; display: block; border-radius: 50%; background: #2c66c6; }
.chat svg { display: block; }
.chat-small { left: 230px; bottom: 6px; width: 56px; height: 56px; }
.chat-large { left: 2740px; top: 1268px; width: 120px; height: 120px; z-index: 20; }

/* Listed */
.listed { display: flex; align-items: flex-end; justify-content: center; gap: 29px; height: 36px; margin-top: 58px; }
.listed-text { margin-bottom: -6px; font-size: 26px; line-height: 32px; letter-spacing: 2.95px; color: #12325f; }
.listed-logo { flex: none; }
.spatial-top { font-family: "Lato", sans-serif; font-size: 27px; font-weight: 400; fill: #141414; }
.spatial-bottom { font-family: "Lato", sans-serif; font-size: 22px; font-weight: 400; fill: #a3a838; }

/* Footer */
.site-footer { position: absolute; left: 0; right: 0; bottom: 0; height: 84px; display: flex; align-items: center; padding: 0 128px 0 134px; z-index: 5; background: #ebf5ea; border-radius: 0 0 18px 18px; }
.site-footer::after { content: ""; position: absolute; left: 1020px; right: 1060px; bottom: 0; height: 26px; background: radial-gradient(ellipse at 50% 100%, rgba(70,80,70,.28), rgba(70,80,70,0) 70%); }
.copyright { flex: none; width: 1029px; font-size: 24px; letter-spacing: 1.97px; color: #12325f; }
.footer-links { display: flex; gap: 27px; font-family: "Lato", sans-serif; font-size: 29px; color: #12325f; position: relative; z-index: 1; margin-top: -4px; }
.footer-contact { margin-left: 3px; letter-spacing: .35px; }
.footer-help { margin-left: 33px; }
.footer-social { display: flex; gap: 28px; margin-left: auto; margin-top: -4px; }
.footer-social svg { display: block; }
```
